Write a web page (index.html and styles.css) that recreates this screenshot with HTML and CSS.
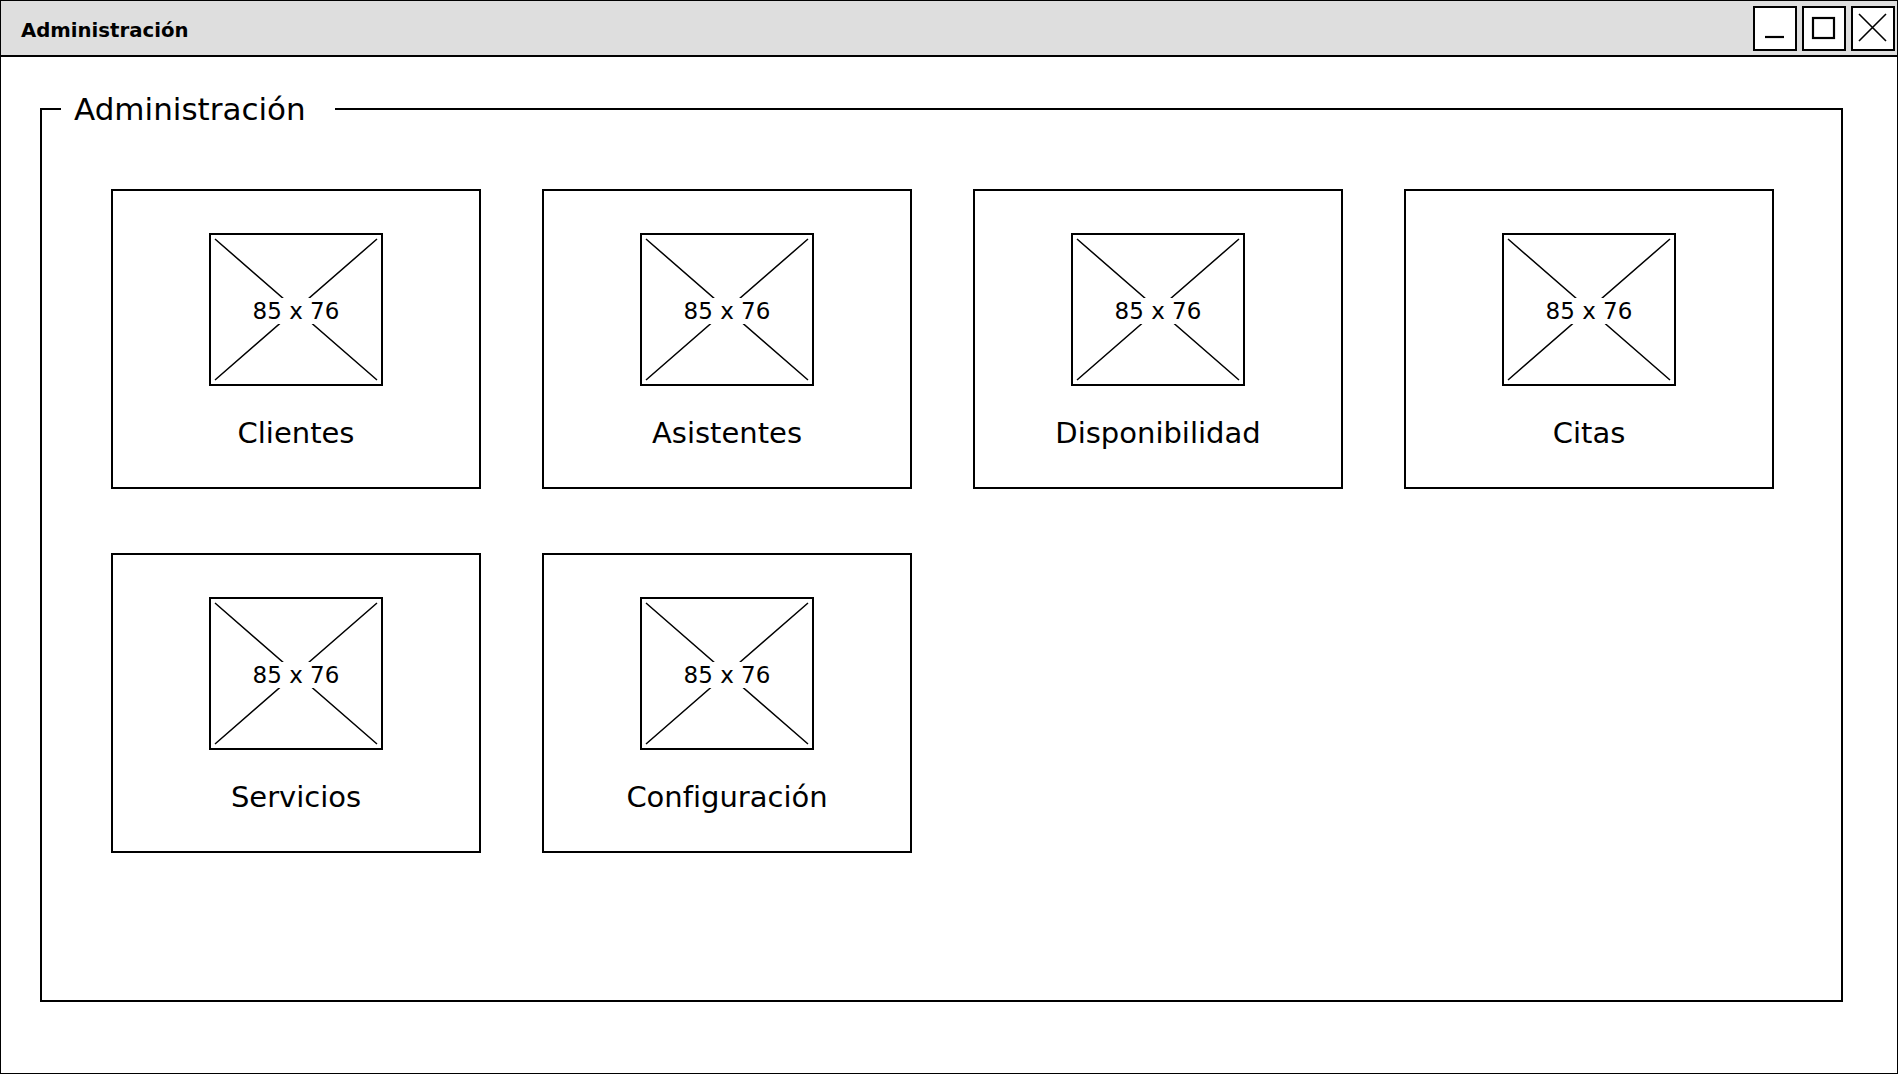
FILE: index.html
```html
<!DOCTYPE html>
<html lang="es">
<head>
<meta charset="utf-8">
<title>Administración</title>
<link rel="stylesheet" href="styles.css">
</head>
<body>
<div class="window">
  <header class="titlebar">
    <span class="title">Administración</span>
    <div class="win-buttons">
      <button class="win-btn" aria-label="Minimizar"><svg viewBox="0 0 40 41" width="40" height="41"><line x1="10" y1="29" x2="29" y2="29" stroke="#000" stroke-width="2.2"/></svg></button>
      <button class="win-btn" aria-label="Maximizar"><svg viewBox="0 0 40 41" width="40" height="41"><rect x="9" y="10" width="21" height="20" fill="none" stroke="#000" stroke-width="2.2"/></svg></button>
      <button class="win-btn" aria-label="Cerrar"><svg viewBox="0 0 40 41" width="40" height="41"><path d="M6 6 L33 33 M33 6 L6 33" stroke="#000" stroke-width="1.6" fill="none"/></svg></button>
    </div>
  </header>
  <main class="content">
    <fieldset class="group">
      <legend class="group-title">Administración</legend>
      <div class="grid">
        <div class="card">
          <div class="ph"><svg class="ph-x" viewBox="0 0 170 149" preserveAspectRatio="none"><path d="M4 4 L166 145 M166 4 L4 145" stroke="#000" stroke-width="1.5" fill="none"/></svg><span class="ph-text">85 x 76</span></div>
          <div class="label">Clientes</div>
        </div>
        <div class="card">
          <div class="ph"><svg class="ph-x" viewBox="0 0 170 149" preserveAspectRatio="none"><path d="M4 4 L166 145 M166 4 L4 145" stroke="#000" stroke-width="1.5" fill="none"/></svg><span class="ph-text">85 x 76</span></div>
          <div class="label">Asistentes</div>
        </div>
        <div class="card">
          <div class="ph"><svg class="ph-x" viewBox="0 0 170 149" preserveAspectRatio="none"><path d="M4 4 L166 145 M166 4 L4 145" stroke="#000" stroke-width="1.5" fill="none"/></svg><span class="ph-text">85 x 76</span></div>
          <div class="label">Disponibilidad</div>
        </div>
        <div class="card">
          <div class="ph"><svg class="ph-x" viewBox="0 0 170 149" preserveAspectRatio="none"><path d="M4 4 L166 145 M166 4 L4 145" stroke="#000" stroke-width="1.5" fill="none"/></svg><span class="ph-text">85 x 76</span></div>
          <div class="label">Citas</div>
        </div>
        <div class="card">
          <div class="ph"><svg class="ph-x" viewBox="0 0 170 149" preserveAspectRatio="none"><path d="M4 4 L166 145 M166 4 L4 145" stroke="#000" stroke-width="1.5" fill="none"/></svg><span class="ph-text">85 x 76</span></div>
          <div class="label">Servicios</div>
        </div>
        <div class="card">
          <div class="ph"><svg class="ph-x" viewBox="0 0 170 149" preserveAspectRatio="none"><path d="M4 4 L166 145 M166 4 L4 145" stroke="#000" stroke-width="1.5" fill="none"/></svg><span class="ph-text">85 x 76</span></div>
          <div class="label">Configuración</div>
        </div>
      </div>
    </fieldset>
  </main>
</div>
</body>
</html>
```

FILE: styles.css
```css
html, body {
  margin: 0;
  padding: 0;
  background: #fff;
}

body {
  font-family: "DejaVu Sans", "Liberation Sans", sans-serif;
  color: #000;
}

.window {
  box-sizing: border-box;
  width: 1898px;
  height: 1074px;
  border: 1px solid #000;
  display: flex;
  flex-direction: column;
  background: #fff;
}

.titlebar {
  box-sizing: border-box;
  height: 56px;
  flex: 0 0 56px;
  background: #dedede;
  border-bottom: 2px solid #000;
  display: flex;
  align-items: center;
  justify-content: space-between;
  padding: 0 2px 0 20px;
}

.title {
  font-weight: bold;
  font-size: 19.7px;
  line-height: 22px;
  margin-top: 5px;
}

.win-buttons {
  display: flex;
  gap: 5px;
}

.win-btn {
  box-sizing: border-box;
  width: 44px;
  height: 45px;
  padding: 0;
  margin: 0;
  border: 2px solid #000;
  background: #fff;
  display: flex;
  align-items: center;
  justify-content: center;
}

.win-btn svg {
  display: block;
}

.content {
  flex: 1;
  display: flex;
  flex-direction: column;
}

.group {
  box-sizing: border-box;
  margin: 34px 54px 0 39px;
  height: 911px;
  border: 2px solid #000;
  padding: 62px 0 0 0;
  min-width: 0;
}

.group-title {
  margin-left: 19px;
  padding: 0 29px 0 13px;
  font-size: 31px;
  line-height: 36px;
}

.grid {
  display: grid;
  grid-template-columns: repeat(4, 370px);
  column-gap: 61px;
  row-gap: 64px;
  margin-left: 69px;
}

.card {
  box-sizing: border-box;
  width: 370px;
  height: 300px;
  border: 2px solid #000;
  display: flex;
  flex-direction: column;
  align-items: center;
  padding-top: 42px;
}

.ph {
  box-sizing: border-box;
  width: 174px;
  height: 153px;
  border: 2px solid #000;
  display: grid;
  place-items: center;
}

.ph-x,
.ph-text {
  grid-area: 1 / 1;
}

.ph-x {
  width: 170px;
  height: 149px;
  display: block;
}

.ph-text {
  position: relative;
  background: #fff;
  font-size: 23px;
  line-height: 26px;
  padding: 0 1px;
  margin-top: 3px;
}

.label {
  margin-top: 30px;
  font-size: 29px;
  line-height: 34px;
}
```
